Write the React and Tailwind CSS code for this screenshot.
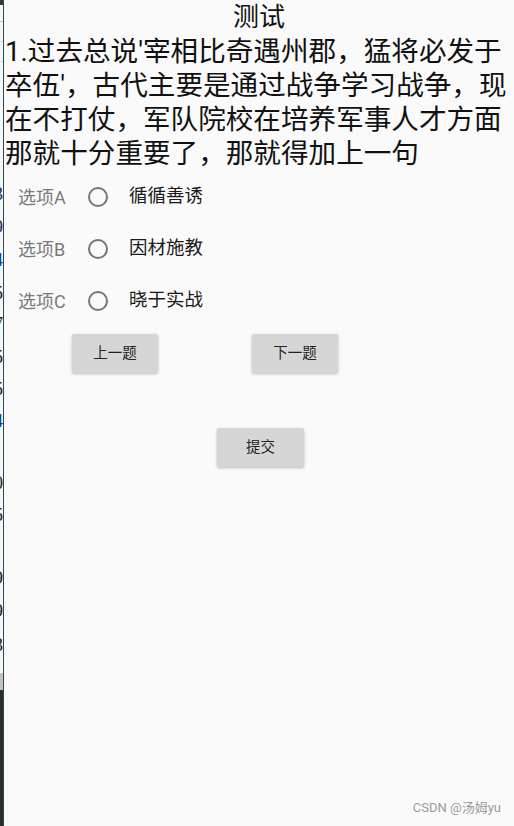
import React from 'react';

const opciones = [
    { etiqueta: '选项A', texto: '循循善诱' },
    { etiqueta: '选项B', texto: '因材施教' },
    { etiqueta: '选项C', texto: '晓于实战' },
];

// restos de la ventana de atrás que asoman por el borde izquierdo
const restos = [
    { y: 'h-[33px]', t: '3', c: 'text-[#1c2b4a]' },
    { y: 'h-[33px]', t: '9', c: 'text-[#1c2b4a]' },
    { y: 'h-[33px]', t: '4', c: 'text-[#123a8a]' },
    { y: 'h-[31px]', t: '5', c: 'text-[#222]' },
    { y: 'h-[33px]', t: '7', c: 'text-[#222]' },
    { y: 'h-[32px]', t: '5', c: 'text-[#222]' },
    { y: 'h-[32px]', t: '5', c: 'text-[#222]' },
    { y: 'h-[62px]', t: '4', c: 'text-[#123a8a]' },
    { y: 'h-[32px]', t: '0', c: 'text-[#222]' },
    { y: 'h-[63px]', t: '5', c: 'text-[#222]' },
    { y: 'h-[33px]', t: '9', c: 'text-[#222]' },
    { y: 'h-[34px]', t: '9', c: 'text-[#222]' },
    { y: 'h-[38px]', t: '3', c: 'text-[#222]' },
];

const Radio = () => (
    <div className="w-[20px] h-[20px] rounded-full border-2 border-[#757575]" />
);

const Boton = ({ children, className = '' }) => (
    <button className={`h-[39px] bg-[#d6d6d6] rounded-[2px] shadow-[0_1px_3px_rgba(0,0,0,0.25)] text-[14.5px] text-[#222] ${className}`}>
        {children}
    </button>
);

const App = () => {
    return (
        <div className="flex h-[826px] w-[514px] bg-[#fafafa] overflow-hidden" style={{ fontFamily: 'Roboto, "Noto Sans CJK SC", sans-serif' }}>
            <div className="w-[4px] flex flex-col border-r border-[#2c4a4a] bg-[#f4f8f8]">
                <div className="h-[5px] bg-[#3a3a3a]" />
                <div className="h-[17px] border-b border-[#c8c8c8]" />
                <div className="h-[20px] border-b border-[#d8d8d8]" />
                <div className="h-[20px] border-b border-[#d8d8d8]" />
                <div className="h-[122px]" />
                {restos.map((r, i) => (
                    <div key={i} className={`${r.y} flex justify-end overflow-hidden`}>
                        <span className={`text-[18px] leading-[20px] ${r.c}`} style={{ fontFamily: '"Liberation Serif", serif' }}>{r.t}</span>
                    </div>
                ))}
                <div className="h-[17px] bg-[#c4c4c4]" />
                <div className="flex-1 bg-[#2a2d2c]" />
            </div>

            <div className="flex-1 flex flex-col">
                <h1 className="text-center text-[26px] leading-[35px] text-[#111]">测试</h1>
                <p className="pl-[1px] text-[27.6px] leading-[34px] text-[#111]">
                    1.过去总说'宰相比奇遇州郡，猛将必发于卒伍'，古代主要是通过战争学习战争，现在不打仗，军队院校在培养军事人才方面那就十分重要了，那就得加上一句
                </p>

                <div className="flex flex-col">
                    {opciones.map((op) => (
                        <div key={op.etiqueta} className="h-[52px] flex items-center">
                            <span className="ml-[14px] w-[70px] text-[18px] text-[#7a7a7a]">{op.etiqueta}</span>
                            <Radio />
                            <span className="ml-[21px] text-[18.5px] text-[#1a1a1a]">{op.texto}</span>
                        </div>
                    ))}
                </div>

                <div className="flex mt-[7px]">
                    <Boton className="ml-[68px] w-[86px]">上一题</Boton>
                    <Boton className="ml-[94px] w-[86px]">下一题</Boton>
                </div>

                <div className="flex justify-center mt-[55px]">
                    <Boton className="w-[87px] ml-[3px]">提交</Boton>
                </div>

                <div className="mt-auto flex justify-end pr-[13px] pb-[9px]">
                    <span className="text-[13px] text-[#9a9a9a]">CSDN @汤姆yu</span>
                </div>
            </div>
        </div>
    );
};

export default App;
